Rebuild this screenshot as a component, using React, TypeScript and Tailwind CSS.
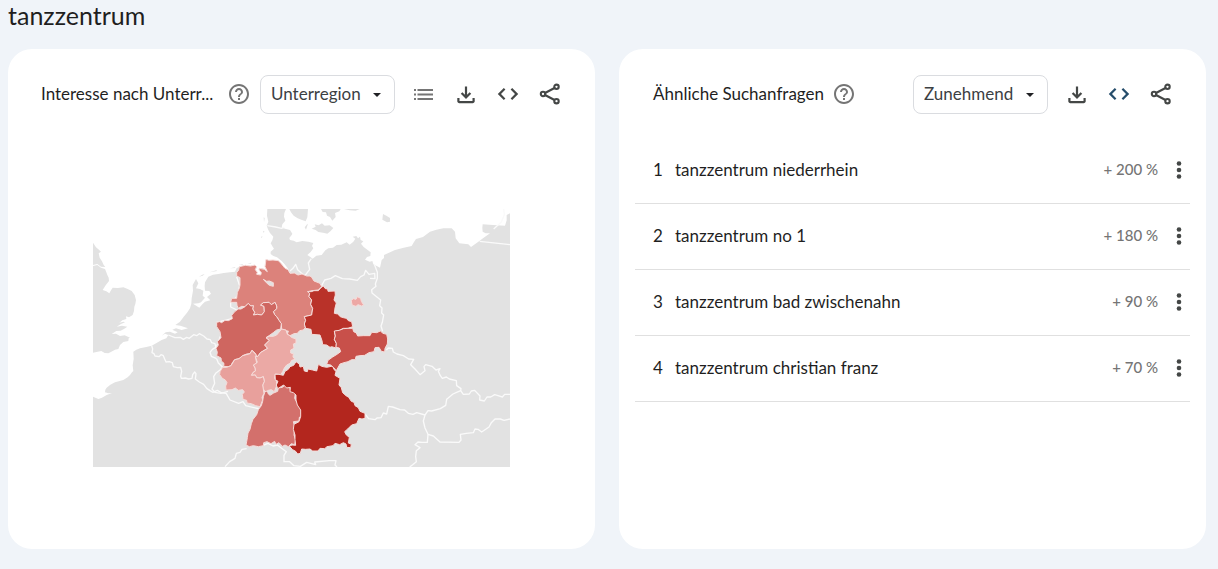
import { useState } from "react";

type MenuProps = { id: string; label: string; options: string[] };

const SelectMenu = ({ id, label, options }: MenuProps) => {
  const [value, setValue] = useState(options[0]);
  return (
    <div className="relative shrink-0">
      <label htmlFor={id} className="hidden">
        {label}
      </label>
      <select
        id={id}
        value={value}
        onChange={(e) => setValue(e.target.value)}
        className="block h-[39px] w-[135px] appearance-none rounded-lg border border-[#dadce0] bg-white pb-0.5 pl-2.5 text-[17px] text-[#3c4043]"
      >
        {options.map((o) => (
          <option key={o}>{o}</option>
        ))}
      </select>
      <svg
        viewBox="0 0 8 4"
        className="pointer-events-none absolute top-[18px] right-3.5 h-1 w-2 fill-[#202124]"
      >
        <path d="M0 0h8L4 4z" />
      </svg>
    </div>
  );
};

const ICONS = {
  help: "M11 18h2v-2h-2v2zm1-16C6.48 2 2 6.48 2 12s4.48 10 10 10 10-4.48 10-10S17.52 2 12 2zm0 18c-4.41 0-8-3.59-8-8s3.59-8 8-8 8 3.59 8 8-3.59 8-8 8zm0-14c-2.21 0-4 1.79-4 4h2c0-1.1.9-2 2-2s2 .9 2 2c0 2-3 1.75-3 5h2c0-2.25 3-2.500 3-5 0-2.210-1.790-4-4-4z",
  list: "M2 7h2v2H2zM5.500 7H21v2H5.500zM2 11.500h2v2H2zM5.500 11.500H21v2H5.500zM2 16h2v2H2zM5.500 16H21v2H5.500z",
  download:
    "M12 17l-5.200-5.200 1.600-1.600L10.900 12.700V4.500h2.200v8.200l2.500-2.500 1.600 1.600zM3.300 16h2.200v3h13v-3h2.200v3.200q0 .8-.6 1.400-.6.6-1.400.6H5.300q-.8 0-1.400-.6-.6-.6-.6-1.400z",
  code: "M7.800 18L1.800 12l6-6 1.600 1.600L5 12l4.400 4.400zM16.200 18l-1.600-1.600L19 12l-4.400-4.400L16.200 6l6 6z",
};

type IconName = keyof typeof ICONS | "share";

const Icon = ({ name }: { name: IconName }) => (
  <svg viewBox="0 0 24 24" className="h-6 w-6 fill-current">
    {name === "share" ? (
      <g fill="none" stroke="currentColor" strokeWidth="2.100">
        <path d="M7 11L16.500 6M7 13l9.500 5" />
        <circle cx="5" cy="12" r="2.200" />
        <circle cx="18.500" cy="4.800" r="2.200" />
        <circle cx="18.500" cy="19.200" r="2.200" />
      </g>
    ) : (
      <path d={ICONS[name]} />
    )}
  </svg>
);

const IconButton = ({ name, label, className = "" }: any) => (
  <button type="button" aria-label={label} className={`h-[37px] shrink-0 ${className}`}>
    <Icon name={name} />
  </button>
);

// Sea outline, everything outside of it is land
const SEA =
  "M0 0V101L5 109 9 115 16 121 24 128 17 133 20 146 27 157 32 168 37 174 24 173 13 165 0 168 0 171 13 168 24 176 36 180 40 190 43 198 47 206 48 216 38 229 29 243 40 247 49 253 54 244 59 236 75 237 91 235 104 240 116 246 125 258 129 273 127 285 124 293 123 306 119 318 108 325 99 322 100 330 88 334 79 341 92 338 96 340 84 345 71 353 87 350 103 353 94 359 83 365 70 366 56 375 69 374 81 381 95 379 111 386 107 388 106 396 91 399 81 408 76 420 66 422 55 428 46 433 35 432 25 426 0 431V563L7 566 16 570 27 566 41 558 57 552 46 553 36 550 37 542 41 536 52 527 66 520 91 513 104 505 111 498 117 490 121 486 119 469 122 450 121 428 130 422 141 418 160 414 176 410 192 401 206 393 220 388 226 378 216 374 206 380 218 370 231 368 246 374 254 370 238 362 249 358 266 363 285 358 262 350 247 348 261 338 271 325 282 311 291 298 295 284 296 268 300 245 299 228 309 210 316 223 309 238 321 240 331 245 329 260 336 266 324 280 316 283 300 284 319 296 328 286 336 278 352 274 342 264 354 254 349 246 336 245 335 231 336 220 346 203 360 197 376 195 392 192 411 190 426 188 431 177 441 173 463 172 486 168 491 176 487 184 491 196 503 198 505 191 500 184 499 178 510 178 516 184 523 188 516 173 519 151 527 154 540 153 556 155 567 168 576 178 590 189 584 178 575 166 566 156 552 145 541 141 533 135 533 128 543 119 539 113 533 103 538 94 541 83 531 72 526 63 521 50 526 38 522 20 523 0H579L574 12 573 23 577 35 568 46 566 56 579 60 591 63 598 74 596 78 589 87 591 93 602 95 611 100 628 96 646 98 661 102 657 111 661 118 653 129 643 138 651 143 659 149 670 140 686 138 697 124 706 118 720 116 731 108 745 107 761 100 770 107 781 98 787 89 779 83 790 81 795 88 801 83 803 93 811 97 804 104 812 114 820 120 833 130 832 141 822 144 816 152 830 158 838 156 841 166 861 176 866 153 873 147 873 138 906 123 932 116 956 111 963 99 969 90 990 84 1011 68 1030 62 1051 58 1076 58 1086 68 1088 88 1099 103 1126 106 1134 114 1155 99 1172 86 1191 73 1178 73 1169 68 1168 57 1169 46 1200 48 1236 50 1241 34 1241 18 1251 13V0Z";

const ISLANDS = [
  "M589 0L594 10 602 20 614 28 625 32 638 37 643 25 645 0Z",
  "M684 0L689 9 699 10 702 20 711 24 718 35 728 24 726 12 739 7 743 0Z",
  "M656 59L668 53 665 46 677 49 687 43 695 50 710 49 721 57 713 66 703 74 690 71 676 69 668 63Z",
  "M639 62L645 44 641 47 635 55Z",
  "M753 0L770 4 788 5 800 0Z",
  "M870 15L880 20 891 27 891 38 882 40 868 32Z",
  "M504 85L508 80 507 87ZM510 65L515 68 511 71ZM512 25L515 27 513 40ZM411 178L425 175 428 177ZM437 168L451 165 448 168ZM463 163L476 161 473 164Z",
  "M318 203L328 197 335 195 329 200ZM350 190L370 184 372 186Z",
];

const BORDERS = [
  // Benelux and France
  "M176 410L179 420 177 431 183 434 186 441 198 443 204 437 211 440 215 450 219 459 229 458 238 461 241 473 253 476 263 475 266 487 263 502 265 508 277 507 287 510 297 508 299 497 305 489 309 494 307 510 319 519 332 526 341 538 351 545 360 550 373 544 383 550 400 554 411 573 437 583 450 578 458 590 500 600",
  "M226 378L246 386 262 385 271 391 281 385 289 388 302 377 311 380 319 374 332 381 342 390 352 392 356 401 366 404 369 418 379 410",
  "M379 410L367 416 358 421 351 430 355 442 371 449",
  "M371 449L376 462 389 475 381 483 368 493 362 503 365 523 357 540 366 550 384 553 405 547",
  // Netherlands and Germany
  "M431 203L440 230 433 262 413 280 413 294 432 303 414 330 371 340 386 372 371 412",
  // Switzerland and Austria
  "M396 773L410 758 426 748 430 733 441 730 447 721 461 719",
  "M508 710L525 703 540 711 553 708 569 720 580 728 573 739 573 758 590 758 603 770 622 772 641 760 668 767 665 759 709 755 729 755 726 768 732 774",
  "M816 615L827 629 846 632 852 627 864 626 871 612 881 615 886 592 899 594 921 602 935 603 946 613 960 616 971 611 996 618",
  "M996 618L1005 605 1016 606 1042 599 1058 589 1061 571 1080 555 1096 548 1103 545 1104 539 1091 530 1090 515 1069 510 1060 504 1048 508 1042 500 1036 487 1041 479 1029 483 1017 472 998 467 993 473 996 485 981 497 966 480 953 467 962 451 947 450 931 440 912 435 901 429 898 418 886 417 880 423",
  "M1103 545L1111 556 1129 555 1135 546 1145 544 1161 561 1160 573 1174 576 1182 564 1193 564 1205 557 1215 560 1228 564 1235 556 1251 556",
  "M996 618L991 636 996 657 1005 676 1021 681 1041 699 1098 700 1104 693 1102 676 1120 673 1141 671 1146 660 1155 661 1166 669 1188 654 1195 641 1206 630 1222 630 1233 634 1251 630",
  "M1005 676L1003 700 988 700 975 699 966 707 981 716 970 725 968 743 970 758 959 767 950 774",
  // northern states and the Oder
  "M523 50L548 54 566 58 574 54",
  "M591 186L600 178 608 166 614 182 625 192 636 200 650 181 646 162 655 149",
  "M686 230L695 213 714 208 727 200 748 209 770 210 793 214 803 203 813 198 818 184 828 196 845 193 846 209 831 208",
  "M844 166L853 190 853 208 847 225 849 232 836 242 837 252 849 262 863 273 860 290 867 297 866 312 872 318 868 340 864 351 869 367",
  "M1160 97L1251 107M1202 60L1225 39 1234 17 1232 0",
];

// Region outlines, ordered so that shared borders overlap cleanly
const REGIONS = [
  {
    name: "Niedersachsen",
    color: "#dc827b",
    d: "M88 185L106 181 122 183 135 180 140 185 136 194 142 202 140 208 152 210 154 203 147 195 148 190 163 193 172 200 165 185 168 163 176 166 189 165 205 167 212 174 225 190 234 194 240 205 253 204 264 210 276 207 290 213 300 213 305 217 312 228 330 235 335 245 325 255 306 257 293 260 299 265 297 275 305 285 302 298 308 310 305 330 296 332 283 335 287 346 283 357 286 368 280 375 269 377 262 385 252 386 240 392 232 388 235 378 222 378 215 372 214 356 207 346 200 335 194 329 190 320 200 311 200 303 195 292 184 299 177 292 160 293 152 300 162 304 163 320 155 330 142 328 130 330 134 322 128 312 130 302 122 303 115 295 105 305 95 304 85 310 81 301 80 292 62 292 65 280 80 280 82 262 88 250 90 240 90 218 80 213 80 203 86 195Z",
  },
  {
    name: "Nordrhein-Westfalen",
    color: "#cf6660",
    d: "M20 352L29 350 35 353 45 346 55 347 67 341 65 331 75 319 85 312 93 312 105 305 115 295 122 303 130 302 128 312 134 322 130 330 142 328 155 330 163 320 162 304 152 300 160 293 177 292 184 299 195 292 200 303 200 311 190 320 194 329 200 335 207 346 214 356 212 372 200 375 191 382 180 390 168 398 178 406 164 420 173 430 151 443 144 454 139 453 136 445 126 436 120 446 110 447 98 452 87 461 74 464 67 473 63 482 55 485 41 484 42 475 34 468 33 459 20 452 22 442 18 430 25 420 22 410 33 398 30 380 20 365Z",
  },
  {
    name: "Hessen",
    color: "#eba9a5",
    d: "M168 398L178 394 190 394 200 390 215 372 228 375 232 388 240 392 244 397 258 402 258 414 250 417 252 430 242 435 242 444 250 446 249 456 255 463 245 466 240 475 230 480 223 489 218 500 212 509 196 507 194 520 200 530 199 545 193 560 184 554 175 556 166 562 159 550 158 540 163 529 160 515 150 519 140 518 136 510 124 511 129 502 136 498 135 489 130 480 135 476 142 472 136 455 144 454 151 443 173 430 164 420 178 406Z",
  },
  {
    name: "Rheinland-Pfalz",
    color: "#e8a09c",
    d: "M126 436L120 446 98 452 87 461 74 464 63 482 50 487 38 487 30 500 29 509 37 520 46 525 51 533 47 543 48 555 66 554 76 549 85 556 98 554 103 561 97 568 99 583 110 586 111 594 124 596 137 602 150 605 154 595 158 585 156 577 162 565 158 540 163 529 160 515 150 519 140 518 136 510 124 511 129 502 136 498 135 489 130 480 140 474 136 455 139 450Z",
  },
  {
    name: "Baden-Württemberg",
    color: "#d3706c",
    d: "M165 560L172 558 175 567 180 571 191 564 203 559 205 549 217 547 225 540 232 547 239 545 241 556 252 558 256 565 254 580 262 595 270 600 275 615 273 625 276 632 268 637 267 648 250 650 254 665 252 690 257 705 254 719 244 716 235 725 225 720 217 724 207 713 198 718 194 709 183 716 171 710 161 713 160 722 145 725 130 722 118 725 108 720 110 710 112 698 114 684 120 673 124 656 129 643 140 629 145 614 154 602 158 589 160 575Z",
  },
  {
    name: "Bayern",
    color: "#b3261e",
    d: "M195 508L207 508 220 511 225 499 235 493 240 485 251 481 258 470 268 477 270 486 280 484 283 498 292 500 294 492 308 495 320 498 325 478 335 484 350 487 368 483 372 493 378 500 375 511 390 520 387 540 394 548 398 563 408 572 416 577 424 589 432 592 435 602 445 608 450 619 465 625 465 640 456 642 447 640 440 656 425 660 413 672 404 680 409 690 418 697 415 714 424 718 422 728 410 727 408 717 400 713 389 719 375 715 369 722 351 725 344 731 330 730 324 738 308 738 300 732 287 733 275 732 271 745 263 747 257 739 248 734 238 724 246 720 257 721 255 704 255 690 250 673 252 658 267 650 272 634 272 615 262 600 258 585 258 570 250 563 240 560 241 547 230 549 221 540 203 551 199 540 204 529 196 524Z",
  },
  {
    name: "Sachsen-Anhalt",
    color: "#b93229",
    d: "M293 260L304 260 312 257 325 257 333 248 340 243 346 251 353 252 354 259 375 258 376 270 372 285 379 294 375 309 373 325 383 327 391 335 400 338 409 340 415 347 425 350 428 365 414 370 400 370 388 376 373 380 376 393 373 403 379 415 378 429 365 425 360 427 350 420 338 419 336 407 330 390 305 388 303 373 287 370 283 357 287 346 283 335 305 330 308 310 302 298 305 285 297 275 299 265Z",
  },
  {
    name: "Sachsen",
    color: "#c8504a",
    d: "M373 378L388 376 400 371 414 370 428 370 431 380 439 384 443 393 460 392 480 392 485 382 500 383 511 378 519 385 530 388 533 402 532 417 525 430 524 441 514 439 507 427 495 428 492 440 477 443 464 451 450 452 438 454 436 464 425 464 414 470 402 473 390 477 379 497 370 487 362 480 350 478 354 466 368 456 381 448 392 440 388 429 378 427 379 415 373 403 376 393Z",
  },
  {
    name: "Berlin",
    color: "#eda8a5",
    d: "M425 294L424 286 430 281 438 283 442 275 452 280 454 289 461 300 455 303 444 299 438 304 427 301Z",
  },
];

const RegionMap = () => (
  <svg
    viewBox="0 0 1251 774"
    role="img"
    aria-label="Interesse nach Unterregion, Karte von Deutschland"
    className="block w-full max-w-[417px]"
  >
    <rect width="1251" height="774" fill="#e2e2e2" />
    <path d={SEA} fill="#fff" />
    {ISLANDS.map((d) => (
      <path key={d} d={d} fill="#e2e2e2" />
    ))}
    <g fill="none" stroke="#fafafa" strokeWidth="4" strokeLinejoin="round">
      {BORDERS.map((d) => (
        <path key={d} d={d} />
      ))}
    </g>
    <g transform="translate(351 -12)" stroke="#f6dcda" strokeWidth="3" strokeLinejoin="round">
      {REGIONS.map((r) => (
        <path key={r.name} d={r.d} fill={r.color} />
      ))}
      <path d="M160 223L170 229 178 228 190 233 190 244 178 241 169 233Z" fill="#e2e2e2" />
    </g>
  </svg>
);

const QUERIES = [
  { query: "tanzzentrum niederrhein", change: "+ 200 %" },
  { query: "tanzzentrum no 1", change: "+ 180 %" },
  { query: "tanzzentrum bad zwischenahn", change: "+ 90 %" },
  { query: "tanzzentrum christian franz", change: "+ 70 %" },
];

export default function App() {
  return (
    <main className="min-h-screen bg-[#f0f4f9] pr-3 pb-5 pl-2 font-[Lato,sans-serif] text-[17px] text-[#1f1f1f]">
      <h1 className="pb-[19px] text-[25px] leading-[30px]">tanzzentrum</h1>
      <div className="grid grid-cols-2 gap-6">
        <section className="flex min-h-[500px] flex-col rounded-3xl bg-white pt-[26px]">
          <header className="flex items-start pr-[33px] pl-[33px]">
            <h2 className="flex-1 leading-[37px] whitespace-nowrap">Interesse nach Unterr...</h2>
            <IconButton name="help" label="Hilfe" className="mr-[9px] text-[#757575]" />
            <SelectMenu id="resolution" label="Auflösung" options={["Unterregion", "Stadt"]} />
            <div className="ml-[17px] flex gap-[18px] text-[#444746]">
              <IconButton name="list" label="Liste" className="text-[#757575]" />
              <IconButton name="download" label="Herunterladen" />
              <IconButton name="code" label="Einbetten" />
              <IconButton name="share" label="Teilen" />
            </div>
          </header>
          <div className="flex justify-center pt-[95px]">
            <RegionMap />
          </div>
        </section>

        <section className="min-h-[500px] rounded-3xl bg-white pt-[26px]">
          <header className="flex items-start pr-[33px] pl-[34px]">
            <h2 className="leading-[37px] whitespace-nowrap">Ähnliche Suchanfragen</h2>
            <IconButton name="help" label="Hilfe" className="ml-2 text-[#757575]" />
            <div className="ml-auto">
              <SelectMenu id="sorting" label="Sortierung" options={["Zunehmend", "Top"]} />
            </div>
            <div className="ml-[17px] flex gap-[18px] text-[#444746]">
              <IconButton name="download" label="Herunterladen" />
              <IconButton name="code" label="Einbetten" className="text-[#264d6b]" />
              <IconButton name="share" label="Teilen" />
            </div>
          </header>
          <ol className="mx-4 mt-6">
            {QUERIES.map((q, i) => (
              <li
                key={q.query}
                className="flex h-[66px] items-center border-b border-[#e0e0e0] pr-[5px] pb-0.5 pl-[18px]"
              >
                <span className="w-[22px]">{i + 1}</span>
                <a href="#" className="flex-1">
                  {q.query}
                </a>
                <span className="mr-[15px] text-[15px] font-medium text-[#757575]">{q.change}</span>
                <button type="button" aria-label="Mehr">
                  <svg viewBox="0 0 12 24" className="h-6 w-3 fill-[#444746]">
                    <circle cx="6" cy="5.500" r="2.300" />
                    <circle cx="6" cy="12" r="2.300" />
                    <circle cx="6" cy="18.500" r="2.300" />
                  </svg>
                </button>
              </li>
            ))}
          </ol>
        </section>
      </div>
    </main>
  );
}
